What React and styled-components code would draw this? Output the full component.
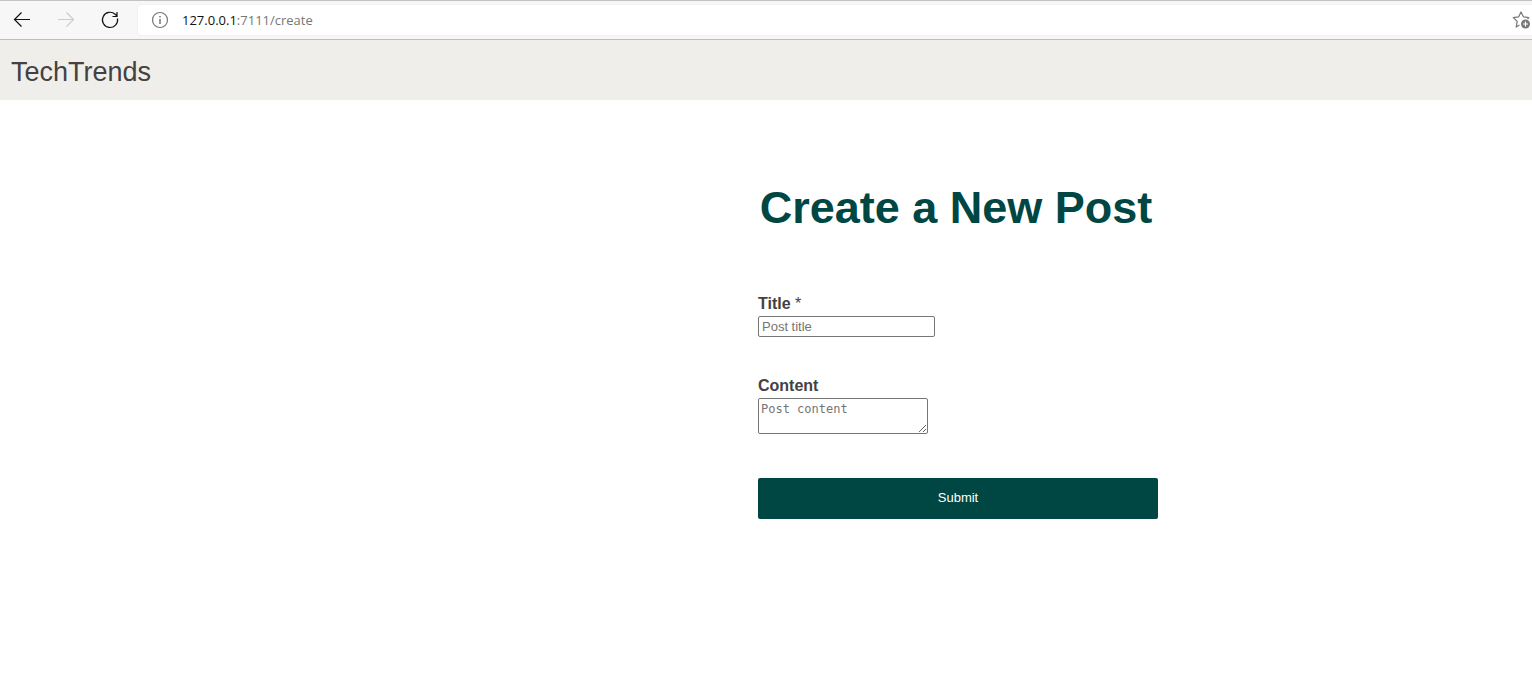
import React from "react";
import styled, { createGlobalStyle } from "styled-components";

const GlobalStyle = createGlobalStyle`
  * { box-sizing: border-box; }
  body {
    margin: 0;
    background: #fff;
    color: #424242;
    font-family: "Liberation Sans", Arial, sans-serif;
    font-size: 16px;
  }
`;

const Toolbar = styled.div`
  display: flex;
  align-items: center;
  height: 40px;
  padding-left: 12px;
  background: #f7f7f7;
  border-top: 1px solid #c3c3c3;
  border-bottom: 1px solid #bdbdbd;
`;

const NavButton = styled.button`
  display: flex;
  width: 20px;
  height: 20px;
  margin-right: 24px;
  padding: 0;
  border: 0;
  background: none;
  color: ${(p) => (p.disabled ? "#cdcdcd" : "#111")};
`;

const AddressBar = styled.div`
  display: flex;
  flex: 1;
  align-items: center;
  gap: 12px;
  height: 30px;
  margin-left: -6px;
  padding-left: 12px;
  background: #fff;
  border-radius: 4px 0 0 4px;
  box-shadow: 0 0 2px #e6e6e6;
  color: #767676;
`;

const Url = styled.span`
  flex: 1;
  font: 13px/20px "Open Sans", "Noto Sans", sans-serif;
`;

const Host = styled.span`
  color: #111;
`;

const FavoriteButton = styled.button`
  display: flex;
  padding: 0;
  border: 0;
  background: none;
  color: #767676;
`;

const SiteHeader = styled.header`
  display: flex;
  align-items: center;
  height: 60px;
  padding: 4px 11px 0;
  background: #f0eeea;
`;

const Brand = styled.a`
  color: #424242;
  font-size: 27px;
  line-height: 32px;
  text-decoration: none;
`;

const Main = styled.main`
  padding: 80px 16px 40px calc(50% - 8px);
`;

const PostForm = styled.form`
  display: flex;
  flex-direction: column;
  align-items: flex-start;
  max-width: 400px;
`;

const Heading = styled.h1`
  align-self: stretch;
  margin: 0 0 56px;
  padding-right: 4px;
  color: #004643;
  font-size: 45px;
  line-height: 56px;
  text-align: center;
  white-space: nowrap;
`;

const Field = styled.div`
  display: flex;
  flex-direction: column;
  align-items: flex-start;
  margin-bottom: ${(p) => p.$gap}px;
`;

const Label = styled.label`
  font-weight: 700;
  line-height: 24px;
`;

const Required = styled.span`
  font-weight: 400;
`;

const TextInput = styled.input`
  width: 177px;
  height: 21px;
  padding: 1px 3px;
  border: 1px solid #767676;
  border-radius: 2px;
  font: 13px "Liberation Sans", Arial, sans-serif;
  &::placeholder { color: #757575; }
`;

const TextArea = styled.textarea`
  width: 170px;
  height: 36px;
  padding: 2px;
  border: 1px solid #767676;
  border-radius: 2px;
  font: 12px/16px "DejaVu Sans Mono", monospace;
  &::placeholder { color: #757575; }
`;

const SubmitButton = styled.button`
  align-self: stretch;
  height: 41px;
  padding: 0 0 2px;
  border: 0;
  border-radius: 2px;
  background: #004643;
  color: #fff;
  font: 13px "Liberation Sans", Arial, sans-serif;
`;

const Arrow = ({ flip }) => (
  <svg width="20" height="20" viewBox="0 0 20 20" fill="none" stroke="currentColor" strokeWidth="1.2">
    <path d={flip ? "M2 9.5H18M10.5 2.5L17.5 9.5L10.5 16.5" : "M18 9.5H2M9.5 2.5L2.5 9.5L9.5 16.5"} />
  </svg>
);

const Reload = () => (
  <svg width="20" height="20" viewBox="0 0 20 20" fill="none" stroke="currentColor" strokeWidth="1.2">
    <path d="M17.5 8.5A7.6 7.6 0 1 1 15.2 4.3L17 6M17 2V6.5H12.5" />
  </svg>
);

const Info = () => (
  <svg width="20" height="20" viewBox="0 0 20 20" fill="none" stroke="currentColor" strokeWidth="1.2">
    <circle cx="10" cy="10" r="7.5" />
    <path d="M10 9V14M10 6V7.5" strokeWidth="1.5" />
  </svg>
);

const StarPlus = () => (
  <svg width="20" height="20" viewBox="0 0 20 20" fill="none" stroke="currentColor" strokeWidth="1.2">
    <path d="M7.5 15L4.2 17L5.2 11.4L1.3 7.6L6.7 6.8L9 2L11.4 6.8L16.8 7.6L15.5 9" strokeLinejoin="round" />
    <circle cx="13.5" cy="14" r="4.5" fill="currentColor" stroke="none" />
    <path d="M11 14H16M13.5 11.5V16.5" stroke="#fff" />
  </svg>
);

export default function App() {
  return (
    <>
      <GlobalStyle />
      <Toolbar>
        <NavButton type="button" aria-label="Back"><Arrow /></NavButton>
        <NavButton type="button" aria-label="Forward" disabled><Arrow flip /></NavButton>
        <NavButton type="button" aria-label="Reload"><Reload /></NavButton>
        <AddressBar>
          <Info />
          <Url><Host>127.0.0.1</Host>:7111/create</Url>
          <FavoriteButton type="button" aria-label="Add to favorites"><StarPlus /></FavoriteButton>
        </AddressBar>
      </Toolbar>
      <SiteHeader>
        <Brand href="/">TechTrends</Brand>
      </SiteHeader>
      <Main>
        <PostForm>
          <Heading>Create a New Post</Heading>
          <Field $gap={37}>
            <Label htmlFor="title">Title <Required>*</Required></Label>
            <TextInput id="title" name="title" placeholder="Post title" />
          </Field>
          <Field $gap={44}>
            <Label htmlFor="content">Content</Label>
            <TextArea id="content" name="content" placeholder="Post content" />
          </Field>
          <SubmitButton type="submit">Submit</SubmitButton>
        </PostForm>
      </Main>
    </>
  );
}
